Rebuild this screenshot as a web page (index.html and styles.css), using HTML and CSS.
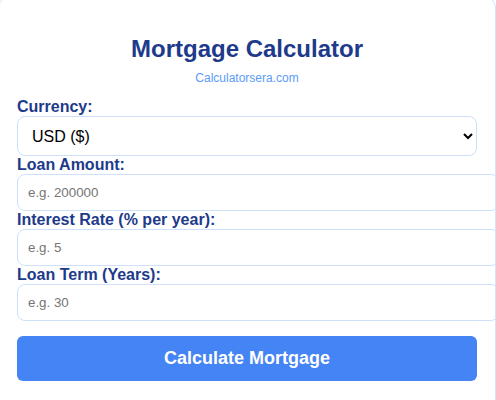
FILE: index.html
```html
<!DOCTYPE html>
<html lang="en">
<head>
<meta charset="utf-8">
<title>Mortgage Calculator</title>
<link rel="stylesheet" href="styles.css">
</head>
<body>
<div class="card">
  <h1 class="title">Mortgage Calculator</h1>
  <p class="site">Calculatorsera.com</p>
  <form class="form">
    <label class="label" for="currency">Currency:</label>
    <select id="currency" class="select">
      <option>USD ($)</option>
    </select>
    <label class="label" for="amount">Loan Amount:</label>
    <input id="amount" class="input" type="number" placeholder="e.g. 200000">
    <label class="label" for="rate">Interest Rate (% per year):</label>
    <input id="rate" class="input" type="number" placeholder="e.g. 5">
    <label class="label" for="term">Loan Term (Years):</label>
    <input id="term" class="input" type="number" placeholder="e.g. 30">
    <button type="button" class="btn">Calculate Mortgage</button>
  </form>
</div>
</body>
</html>
```

FILE: styles.css
```css
html, body {
  margin: 0;
  padding: 0;
  background: #ffffff;
}

body {
  font-family: "Liberation Sans", Arial, sans-serif;
}

.card {
  margin: -4px 0 0 -2px;
  padding: 18px 18px 40px;
  border: 1px solid #d3e3fb;
  border-radius: 12px;
  background: #ffffff;
  overflow: hidden;
}

.title {
  margin: 20px 0 8px;
  font-size: 24px;
  font-weight: bold;
  color: #1e3a8a;
  text-align: center;
}

.site {
  margin: 0 0 13px;
  font-size: 12px;
  color: #5b9cf6;
  text-align: center;
}

.form {
  display: block;
}

.label {
  display: block;
  font-size: 16px;
  font-weight: bold;
  color: #1e3a8a;
}

.select {
  display: block;
  box-sizing: border-box;
  width: 100%;
  height: 40px;
  padding: 10px;
  font-family: "Liberation Sans", Arial, sans-serif;
  font-size: 16px;
  color: #000;
  background: #fff;
  border: 1px solid #cfe0fa;
  border-radius: 8px;
}

.input {
  display: block;
  width: 100%;
  height: 15px;
  padding: 10px;
  margin: 0;
  font-family: "Liberation Sans", Arial, sans-serif;
  font-size: 13.333px;
  border: 1px solid #cfe0fa;
  border-radius: 8px;
  background: transparent;
}

.input::placeholder {
  color: #757575;
}

.btn {
  display: block;
  box-sizing: border-box;
  width: 100%;
  margin-top: 15px;
  padding: 12px;
  font-family: "Liberation Sans", Arial, sans-serif;
  font-size: 18px;
  font-weight: bold;
  color: #fff;
  background: #4584f4;
  border: none;
  border-radius: 6px;
}
```
